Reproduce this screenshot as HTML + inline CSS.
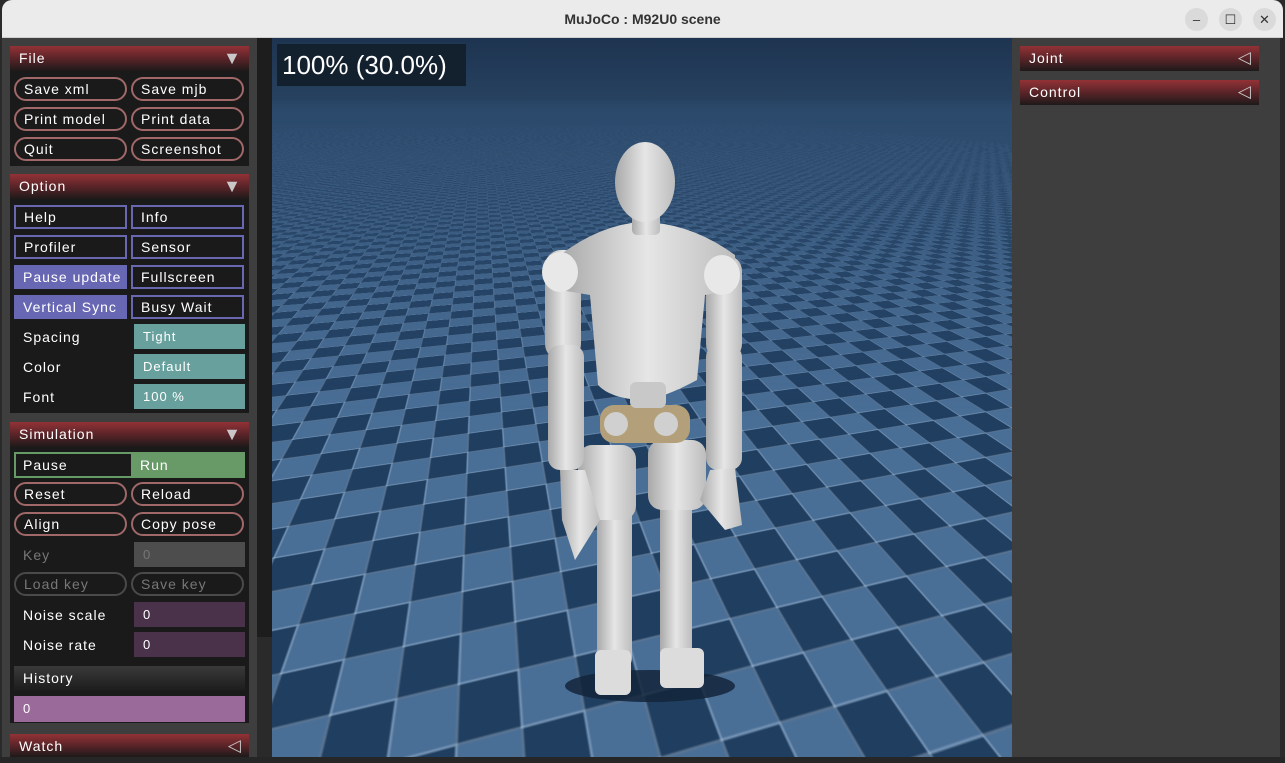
<!DOCTYPE html>
<html><head><meta charset="utf-8"><style>
*{margin:0;padding:0;box-sizing:border-box}
body{width:1285px;height:763px;overflow:hidden;background:#2a2a2a;font-family:"Liberation Sans",sans-serif;position:relative}
.abs{position:absolute}
#title{left:2px;top:0;width:1281px;height:38px;background:#ebebeb;border-radius:10px 10px 0 0;border-bottom:1px solid #cfcfcf}
#title .t{position:absolute;left:0;right:0;top:11px;text-align:center;font-weight:bold;font-size:14px;color:#333}
.wb{position:absolute;top:8px;width:23px;height:23px;border-radius:50%;background:#dadada;color:#333;font-size:13px;text-align:center;line-height:23px}
#lp{left:2px;top:38px;width:255px;height:719px;background:#3e3e3e}
#sb{left:257px;top:38px;width:15px;height:599px;background:#1d1d1d}
#rp{left:1012px;top:38px;width:268px;height:719px;background:#3e3e3e}
.sec{position:absolute;left:10px;width:239px;background:#1a1a1a}
.hd{position:absolute;height:25px;background:linear-gradient(#933236,#5a2428 50%,#1e1a1a);color:#fff;font-size:14px;letter-spacing:1px;line-height:25px;padding-left:9px}
.tri{position:absolute;right:7px;top:0;color:#c8c8c8;font-size:18px;line-height:24px}
.tl{font-size:17px}
.b{position:absolute;height:24px;width:113px;color:#fff;font-size:14px;letter-spacing:1px;line-height:21px;padding-left:8px;white-space:nowrap}
.p{border:2px solid #a06868;border-radius:12px;background:#1a1a1a}
.o{border:2px solid #6867b0;background:#1a1a1a}
.of{background:#6867b4}
.lab{position:absolute;color:#fff;font-size:14px;letter-spacing:1px;left:23px}
.f{position:absolute;left:134px;width:111px;height:25px;color:#fff;font-size:13px;letter-spacing:1px;line-height:25px;padding-left:9px}
#view{left:272px;top:38px;width:740px;height:719px;overflow:hidden;background:linear-gradient(#1e3450,#26415f 60px,#2d4a6b 78px);perspective:600px;perspective-origin:370px 62px}
#plane{position:absolute;left:-2630px;top:322px;width:6000px;height:6000px;transform-origin:50% 0;transform:translateZ(500px) rotateX(-90deg) rotateZ(15deg);
background:linear-gradient(90deg,rgba(200,220,240,.35) 1px,transparent 1px),linear-gradient(rgba(200,220,240,.35) 1px,transparent 1px),repeating-conic-gradient(#4a6f97 0 25%,#203e60 0 50%);background-size:26px 26px,26px 26px,52px 52px}
#fog{left:0;top:0;width:740px;height:719px;background:linear-gradient(transparent 60px,#2c4a6c 75px,rgba(48,78,112,.85) 120px,rgba(50,80,115,.3) 260px,transparent 380px)}
#pct{left:5px;top:6px;width:189px;height:42px;background:#13202e;color:#fff;font-size:26px;line-height:42px;padding-left:5px}
</style></head><body>
<div class="abs" id="title"><div class="t">MuJoCo : M92U0 scene</div>
<div class="wb" style="left:1183px">–</div><div class="wb" style="left:1217px">☐</div><div class="wb" style="left:1251px">✕</div></div>

<div class="abs" id="lp"></div>
<div class="abs" id="sb"></div>
<div class="abs" id="rp"></div>
<div class="abs" style="left:0;top:757px;width:1285px;height:6px;background:#262626"></div>

<div class="sec" style="top:46px;height:120px"></div>
<div class="hd" style="left:10px;top:46px;width:239px">File<span class="tri">▼</span></div>
<div class="b p" style="left:14px;top:77px">Save xml</div><div class="b p" style="left:131px;top:77px">Save mjb</div>
<div class="b p" style="left:14px;top:107px">Print model</div><div class="b p" style="left:131px;top:107px">Print data</div>
<div class="b p" style="left:14px;top:137px">Quit</div><div class="b p" style="left:131px;top:137px">Screenshot</div>

<div class="sec" style="top:174px;height:239px"></div>
<div class="hd" style="left:10px;top:174px;width:239px">Option<span class="tri">▼</span></div>
<div class="b o" style="left:14px;top:205px">Help</div><div class="b o" style="left:131px;top:205px">Info</div>
<div class="b o" style="left:14px;top:235px">Profiler</div><div class="b o" style="left:131px;top:235px">Sensor</div>
<div class="b of" style="left:14px;top:265px;line-height:24px;padding-left:9px">Pause update</div><div class="b o" style="left:131px;top:265px">Fullscreen</div>
<div class="b of" style="left:14px;top:295px;line-height:24px;padding-left:9px">Vertical Sync</div><div class="b o" style="left:131px;top:295px">Busy Wait</div>
<div class="lab" style="top:329px">Spacing</div><div class="f" style="top:324px;background:#67a09c">Tight</div>
<div class="lab" style="top:359px">Color</div><div class="f" style="top:354px;background:#67a09c">Default</div>
<div class="lab" style="top:389px">Font</div><div class="f" style="top:384px;background:#67a09c">100 %</div>

<div class="sec" style="top:422px;height:301px"></div>
<div class="hd" style="left:10px;top:422px;width:239px">Simulation<span class="tri">▼</span></div>
<div class="abs" style="left:14px;top:452px;width:231px;height:26px;background:#689a68"></div>
<div class="abs" style="left:16px;top:454px;width:115px;height:22px;background:#1a1a1a"></div>
<div class="lab" style="top:457px">Pause</div><div class="lab" style="top:457px;left:140px">Run</div>
<div class="b p" style="left:14px;top:482px">Reset</div><div class="b p" style="left:131px;top:482px">Reload</div>
<div class="b p" style="left:14px;top:512px">Align</div><div class="b p" style="left:131px;top:512px">Copy pose</div>
<div class="lab" style="top:547px;color:#777">Key</div><div class="f" style="top:542px;background:#4d4d4d;color:#777">0</div>
<div class="b p" style="left:14px;top:572px;border-color:#4a4a4a;color:#777">Load key</div><div class="b p" style="left:131px;top:572px;border-color:#4a4a4a;color:#777">Save key</div>
<div class="lab" style="top:607px">Noise scale</div><div class="f" style="top:602px;background:#4a334a">0</div>
<div class="lab" style="top:637px">Noise rate</div><div class="f" style="top:632px;background:#4a334a">0</div>
<div class="hd" style="left:14px;top:666px;width:231px;background:linear-gradient(#3a3a3a,#1c1c1c)">History</div>
<div class="abs" style="left:14px;top:696px;width:231px;height:26px;background:#9a6a9a;color:#fff;font-size:13px;line-height:26px;padding-left:9px">0</div>

<div class="hd" style="left:10px;top:734px;width:239px;height:23px">Watch<span class="tri tl">◁</span></div>

<div class="hd" style="left:1020px;top:46px;width:239px">Joint<span class="tri tl">◁</span></div>
<div class="hd" style="left:1020px;top:80px;width:239px">Control<span class="tri tl">◁</span></div>

<div class="abs" id="view">
<div id="plane"></div>
<div class="abs" id="fog"></div>
<svg class="abs" style="left:0;top:0" width="740" height="719" viewBox="272 38 740 719">
<defs>
<linearGradient id="g" x1="0" x2="1"><stop offset="0" stop-color="#a9a9a9"/><stop offset=".5" stop-color="#e6e6e6"/><stop offset="1" stop-color="#bdbdbd"/></linearGradient>
</defs>
<ellipse cx="650" cy="686" rx="85" ry="16" fill="#13243a" opacity=".85"/>
<g fill="url(#g)">
<rect x="597" y="500" width="35" height="170" rx="12"/>
<rect x="660" y="495" width="32" height="175" rx="12"/>
<rect x="578" y="445" width="58" height="75" rx="14"/>
<rect x="648" y="440" width="58" height="70" rx="14"/>
<rect x="595" y="650" width="36" height="45" rx="6" fill="#dcdcdc"/>
<rect x="660" y="648" width="44" height="40" rx="6" fill="#dcdcdc"/>
<rect x="545" y="250" width="36" height="110" rx="16"/>
<rect x="548" y="345" width="36" height="125" rx="12"/>
<path d="M560 470 L585 470 L600 520 L575 560 L562 520 Z"/>
<rect x="706" y="255" width="36" height="105" rx="16"/>
<rect x="706" y="345" width="36" height="125" rx="12"/>
<path d="M710 470 L735 468 L742 525 L725 530 L700 500 Z"/>
<path d="M560 255 Q600 225 640 222 Q690 222 735 255 L735 290 L705 295 L697 380 Q660 400 640 400 Q610 398 598 385 L590 295 L560 290 Z"/>
<rect x="632" y="210" width="28" height="25" rx="5"/>
<ellipse cx="645" cy="182" rx="30" ry="40"/>
</g>
<ellipse cx="560" cy="272" rx="18" ry="20" fill="#e8e8e8"/>
<ellipse cx="722" cy="275" rx="18" ry="20" fill="#e8e8e8"/>
<rect x="600" y="405" width="90" height="38" rx="14" fill="#b3a07a"/>
<circle cx="616" cy="424" r="12" fill="#d0d0d0"/><circle cx="666" cy="424" r="12" fill="#d0d0d0"/>
<rect x="630" y="382" width="36" height="26" rx="6" fill="#c8c8c8"/>
</svg>
<div class="abs" id="pct">100% (30.0%)</div>
</div>
</body></html>
